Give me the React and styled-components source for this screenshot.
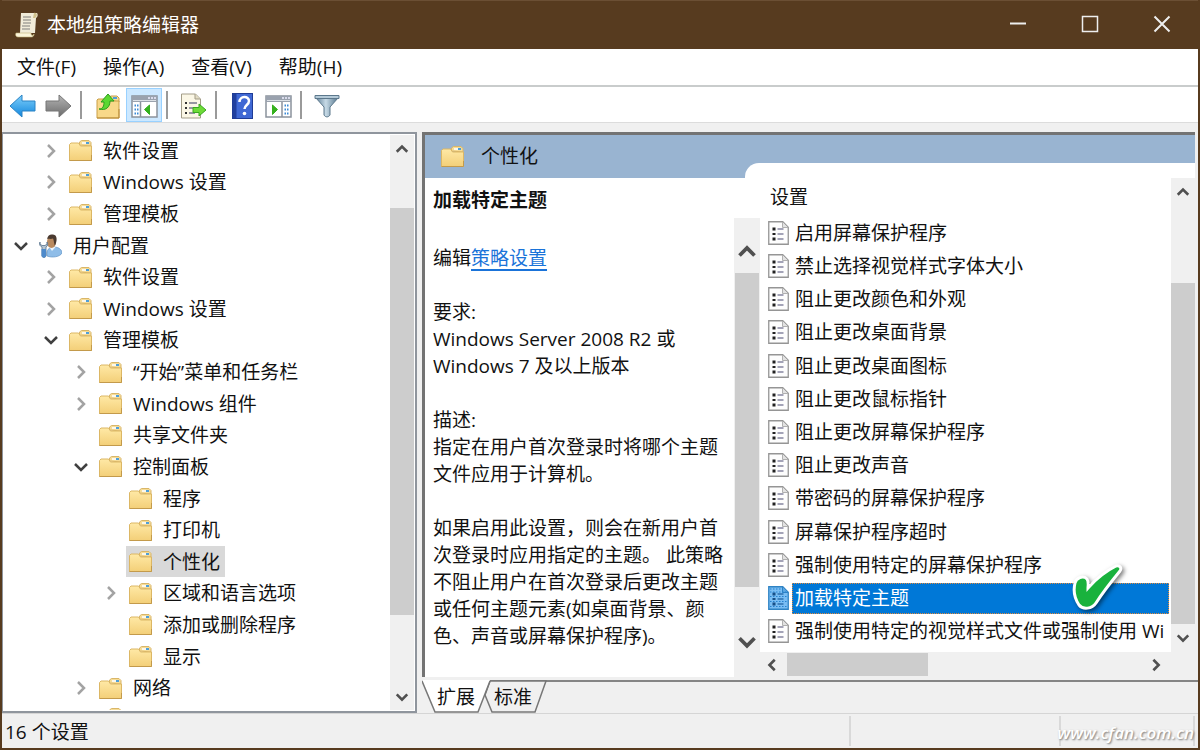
import React from "react"
import styled, { createGlobalStyle, css } from "styled-components"

const tree = [
  { level: 1, text: "软件设置", state: "closed" },
  { level: 1, text: "Windows 设置", state: "closed" },
  { level: 1, text: "管理模板", state: "closed" },
  { level: 0, text: "用户配置", state: "open", icon: "user" },
  { level: 1, text: "软件设置", state: "closed" },
  { level: 1, text: "Windows 设置", state: "closed" },
  { level: 1, text: "管理模板", state: "open" },
  { level: 2, text: "“开始”菜单和任务栏", state: "closed" },
  { level: 2, text: "Windows 组件", state: "closed" },
  { level: 2, text: "共享文件夹" },
  { level: 2, text: "控制面板", state: "open" },
  { level: 3, text: "程序" },
  { level: 3, text: "打印机" },
  { level: 3, text: "个性化", selected: true },
  { level: 3, text: "区域和语言选项", state: "closed" },
  { level: 3, text: "添加或删除程序" },
  { level: 3, text: "显示" },
  { level: 2, text: "网络", state: "closed" },
]

const settings = [
  "启用屏幕保护程序",
  "禁止选择视觉样式字体大小",
  "阻止更改颜色和外观",
  "阻止更改桌面背景",
  "阻止更改桌面图标",
  "阻止更改鼠标指针",
  "阻止更改屏幕保护程序",
  "阻止更改声音",
  "带密码的屏幕保护程序",
  "屏幕保护程序超时",
  "强制使用特定的屏幕保护程序",
  "加载特定主题",
  "强制使用特定的视觉样式文件或强制使用 Wi",
]

const menus = ["文件(F)", "操作(A)", "查看(V)", "帮助(H)"]

/* icons */

const ScrollIcon = () => (
  <svg width="24" height="26" viewBox="0 0 24 26">
    <path d="M6 1h16c1 1 1 4-1 5l-1 15H5z" fill="#f1ecd9" />
    <path d="M19 1c3-1 4 3 1 5h-2z" fill="#cfc08c" />
    <path d="M1 21h15c0 3 2 3 3 1v1c-1 2-2 2-3 2H3c-2 0-3-2-2-4z" fill="#fbf5da" stroke="#c2b478" strokeWidth=".6" />
    <path d="M8 5h8M8 8h8M8 11h8M7 14h8M7 17h8" stroke="#a5a29b" strokeWidth="1.3" />
  </svg>
)

const FolderIcon = () => (
  <svg width="23" height="22" viewBox="0 0 23 22">
    <defs>
      <linearGradient id="folder" x1="0" y1="0" x2="0" y2="1">
        <stop offset="0" stopColor="#ffe9a6" />
        <stop offset="1" stopColor="#f3cf78" />
      </linearGradient>
    </defs>
    <path d="M10.500 5V2l2-1.500h7.500l2 2V6z" fill="#f6dc97" stroke="#d9b668" />
    <path d="M13 3h7" stroke="#fff" strokeWidth="1.600" />
    <path d="M17 3h3" stroke="#4f9fd8" strokeWidth="2" />
    <path d="M.5 4.500L2 3h7.500l2 3h11v14.500H.5z" fill="url(#folder)" stroke="#dcb765" />
    <path d="M.5 20.500h22V15" fill="none" stroke="#c39a4b" />
  </svg>
)

const UserIcon = () => (
  <svg width="23" height="24" viewBox="0 0 23 24">
    <path d="M8 22c-1-6 2-9 7-9 5 0 8 3 8 6-2 4-10 5-15 3z" fill="#8fbde8" stroke="#5f92c6" strokeWidth=".7" />
    <path d="M10 12.500l3 4.500 4-4.500z" fill="#eef5fc" />
    <ellipse cx="12.500" cy="8" rx="4.500" ry="6" fill="#b98a5f" />
    <path d="M8 5c1-4 3-5 6-4.500 5 .5 4 7 2 11-1-1-1-5-2-7-2 1-4 0-6 .5z" fill="#4a3a30" />
    <path d="M1 8c-1 3 0 4 2 5v9c1 2 3 2 4 0v-9c2-1 2-3 1-5v2l-2 1.500H3L1 10z" fill="#b3c3d1" stroke="#56718b" strokeWidth=".8" />
    <path d="M2.500 15h4.500v7c-1 2-3.500 2-4.500 0z" fill="#4d8acb" />
  </svg>
)

const PolicyIcon = ({ selected }) => (
  <svg width="21" height="24" viewBox="0 0 21 24">
    <path
      d="M.75.75h14l5.500 5.500v17H.75z"
      fill={selected ? "#79bdf3" : "#fdfdfd"}
      stroke={selected ? "#2f83c4" : "#959595"}
      strokeWidth="1.3"
    />
    <path d="M14.500 1v5.500H20" fill={selected ? "#5ba6e2" : "#e2e2e2"} stroke={selected ? "#2f83c4" : "#b0b0b0"} />
    <path
      d="M4.500 6.500h3v3h-3zM4.500 12h3v2h-3zM4.500 16.500h3v3h-3z"
      fill={selected ? "#174f87" : "#222"}
    />
    <path d="M9.500 8h6M9.500 13h6M9.500 18h6" stroke={selected ? "#2d6fae" : "#8585a0"} strokeWidth="1.3" />
    {selected && (
      <path
        d="M2 3h13M2 6h17M2 10.500h17M2 15.500h17M2 20.500h17"
        stroke="#2581cf"
        strokeDasharray="1.500 1.500"
      />
    )}
  </svg>
)

const ArrowIcon = ({ forward }) => (
  <svg width="27" height="24" viewBox="0 0 27 24">
    <defs>
      <linearGradient id={forward ? "fwd" : "back"} x1="0" y1="0" x2="0" y2="1">
        <stop offset="0" stopColor={forward ? "#b5b5b5" : "#7fd0fb"} />
        <stop offset="1" stopColor={forward ? "#6b6b6b" : "#1186dd"} />
      </linearGradient>
    </defs>
    <path
      d="M1 12L13 1v6h13v10H13v6z"
      transform={forward ? "translate(27 0) scale(-1 1)" : undefined}
      fill={forward ? "url(#fwd)" : "url(#back)"}
      stroke={forward ? "#777" : "#2a83c5"}
      strokeLinejoin="round"
    />
  </svg>
)

const FolderUpIcon = () => (
  <svg width="24" height="26" viewBox="0 0 24 26">
    <path d="M13 7V4l2-1h6l2 2v4z" fill="#f6dc97" stroke="#c99e46" />
    <path d="M17 5h4" stroke="#4f9fd8" strokeWidth="2" />
    <path d="M1 7l1-1h8l2 2h11v17H1z" fill="#f8d889" stroke="#c99e46" />
    <path d="M1 25h22V16" fill="none" stroke="#b98b37" />
    <path d="M3 16c4 0 5-3 5-7H5l7-8 6 7h-4c0 6-4 10-11 8z" fill="#5cd832" stroke="#2b9c1c" strokeLinejoin="round" />
  </svg>
)

const PanelIcon = ({ flip }) => (
  <svg width="27" height="24" viewBox="0 0 27 24">
    <rect x="1" y="2" width="25" height="21" fill="#fff" stroke="#8b929c" strokeWidth="1.500" />
    <path d="M1 2h25v6H1z" fill="#9aa2ae" />
    <path d="M2 6.500h23" stroke="#dde1e6" />
    <path d="M17 4h2M20 4h2M23 4h2" stroke="#eef" strokeWidth="1.500" />
    {flip ? (
      <>
        <path d="M17 8v15" stroke="#8b929c" strokeWidth="1.500" />
        <path d="M19.500 11.500h4M19.500 15.500h4M19.500 19.500h4" stroke="#3c8bd6" strokeWidth="2" strokeDasharray="1.500 1" />
        <path d="M7.500 11l5 4.500-5 5z" fill="#36b11f" stroke="#36b11f" />
      </>
    ) : (
      <>
        <path d="M9.500 8v15" stroke="#8b929c" strokeWidth="1.500" />
        <path d="M3.500 11.500h4M3.500 15.500h4M3.500 19.500h4" stroke="#3c8bd6" strokeWidth="2" strokeDasharray="1.500 1" />
        <path d="M18.500 11l-5 4.500 5 5z" fill="#36b11f" stroke="#36b11f" />
      </>
    )}
  </svg>
)

const ExportIcon = () => (
  <svg width="27" height="26" viewBox="0 0 27 26">
    <path d="M1.500 1h14l5 5v19h-19z" fill="#fbf7e6" stroke="#a39d88" />
    <path d="M15 1v5h5" fill="#e2dcc4" stroke="#a39d88" />
    <path d="M5 10h2M5 15h2M5 20h2" stroke="#333" strokeWidth="2" />
    <path d="M9 10h8M9 15h5M9 20h6" stroke="#77778a" strokeWidth="1.500" />
    <path d="M13 14.500h6V11l7 6-7 6v-3.500h-6z" fill="#6edb38" stroke="#38a820" strokeLinejoin="round" />
  </svg>
)

const HelpIcon = () => (
  <svg width="21" height="26" viewBox="0 0 21 26">
    <rect x=".5" y=".5" width="20" height="25" fill="#3f68d4" stroke="#1f3c96" />
    <path d="M1 1h3.500v24H1z" fill="#203f9e" />
    <path d="M7.500 9c0-6.500 9.500-6.500 9.500-1 0 4-4.500 4-4.500 8" fill="none" stroke="#fff" strokeWidth="2.500" />
    <circle cx="12.500" cy="20.500" r="1.800" fill="#fff" />
  </svg>
)

const FilterIcon = () => (
  <svg width="26" height="24" viewBox="0 0 26 24">
    <defs>
      <linearGradient id="funnel">
        <stop offset="0" stopColor="#5d7c94" />
        <stop offset=".45" stopColor="#c7dae6" />
        <stop offset="1" stopColor="#4f7189" />
      </linearGradient>
    </defs>
    <path d="M1.500 3.500L10 13v8c1.500 2.500 4.500 2.500 6 0v-8l8.500-9.500z" fill="url(#funnel)" stroke="#5c788c" />
    <path d="M1 1.500h24v3H1z" fill="#b4cad8" stroke="#5c788c" />
  </svg>
)

const paths = {
  up: "M2 10l6-6 6 6",
  down: "M2 5l6 6 6-6",
  left: "M10 2L4 8l6 6",
  right: "M5 2l6 6-6 6",
}

const Chevron = ({ dir, size = 16, color = "#505050", weight = 3 }) => (
  <svg width={size} height={size} viewBox="0 0 16 16">
    <path d={paths[dir]} fill="none" stroke={color} strokeWidth={weight} />
  </svg>
)

const CheckMark = () => (
  <svg width="54" height="48" viewBox="0 0 54 48">
    <path
      d="M4 20c1-5 8-8 12-4 2 3 1 7 1 9 8-9 18-17 28-22 4-1 6 2 4 5-9 11-17 21-24 32-4 6-13 7-17 2-4-6-6-14-4-22z"
      fill="#19b23d"
      stroke="#fff"
      strokeWidth="3"
    />
  </svg>
)

function Scrollbar({ name, horizontal, size, first, thumb, last, inset = 0, arrow = 14, pad }) {
  return (
    <Bar $horizontal={horizontal} $size={size}>
      <ArrowButton
        aria-label={`${name} ${horizontal ? "left" : "up"}`}
        $length={first}
        $align={pad && "flex-end"}
        $pad={pad}
      >
        <Chevron dir={horizontal ? "left" : "up"} size={arrow} />
      </ArrowButton>
      <Track>
        <Space $grow={thumb[0]} />
        <Thumb $grow={thumb[1]} $inset={inset} />
        <Space $grow={thumb[2]} />
      </Track>
      <ArrowButton
        aria-label={`${name} ${horizontal ? "right" : "down"}`}
        $length={last}
        $align={pad && "flex-start"}
        $pad={pad}
      >
        <Chevron dir={horizontal ? "right" : "down"} size={arrow} />
      </ArrowButton>
    </Bar>
  )
}

function TreeRow({ item }) {
  return (
    <TreeItem $level={item.level}>
      <Toggle>
        {item.state === "open" && <Chevron dir="down" color="#404040" weight={2.5} />}
        {item.state === "closed" && <Chevron dir="right" color="#a3a3a3" weight={2.5} />}
      </Toggle>
      <TreeButton $selected={item.selected}>
        {item.icon === "user" ? <UserIcon /> : <FolderIcon />}
        {item.text}
      </TreeButton>
    </TreeItem>
  )
}

export default function App() {
  return (
    <Window>
      <GlobalStyle />
      <TitleBar>
        <ScrollIcon />
        <Title>本地组策略编辑器</Title>
        <WindowButton aria-label="最小化">
          <svg width="18" height="18"><path d="M1 8.500h16" stroke="#eee" strokeWidth="2" /></svg>
        </WindowButton>
        <WindowButton aria-label="最大化">
          <svg width="18" height="18"><path d="M1.500 1.500h15v15h-15z" fill="none" stroke="#eee" strokeWidth="1.500" /></svg>
        </WindowButton>
        <WindowButton aria-label="关闭">
          <svg width="18" height="18"><path d="M1.500 1.500l15 15m0-15l-15 15" stroke="#eee" strokeWidth="2" /></svg>
        </WindowButton>
      </TitleBar>

      <MenuBar>
        {menus.map(menu => (
          <MenuButton key={menu}>{menu}</MenuButton>
        ))}
      </MenuBar>

      <ToolBar>
        <ToolButton aria-label="后退"><ArrowIcon /></ToolButton>
        <ToolButton aria-label="前进"><ArrowIcon forward /></ToolButton>
        <Separator />
        <ToolButton aria-label="向上一级"><FolderUpIcon /></ToolButton>
        <ToolButton aria-label="显示控制台树" $active><PanelIcon /></ToolButton>
        <Separator />
        <ToolButton aria-label="导出列表"><ExportIcon /></ToolButton>
        <Separator />
        <ToolButton aria-label="帮助"><HelpIcon /></ToolButton>
        <ToolButton aria-label="显示操作窗格"><PanelIcon flip /></ToolButton>
        <Separator />
        <ToolButton aria-label="筛选器"><FilterIcon /></ToolButton>
      </ToolBar>

      <Main>
        <TreePane>
          <Tree>
            {tree.map((item, i) => (
              <TreeRow key={i} item={item} />
            ))}
            <ClippedRow><FolderIcon /></ClippedRow>
          </Tree>
          <Scrollbar name="tree" size={24} first={30} last={26} thumb={[43, 407, 69]} />
        </TreePane>

        <Right>
          <Details>
            <Header>
              <HeaderTitle>
                <FolderIcon />
                个性化
              </HeaderTitle>
              <HeaderCurve />
            </Header>
            <Body>
              <Description>
                <h1>加载特定主题</h1>
                <p>编辑<a href="#policy">策略设置</a></p>
                <p>
                  要求:
                  <br />
                  Windows Server 2008 R2 或
                  <br />
                  Windows 7 及以上版本
                </p>
                <p>
                  描述:
                  <br />
                  指定在用户首次登录时将哪个主题
                  <br />
                  文件应用于计算机。
                </p>
                <p>
                  如果启用此设置，则会在新用户首
                  <br />
                  次登录时应用指定的主题。 此策略
                  <br />
                  不阻止用户在首次登录后更改主题
                  <br />
                  或任何主题元素(如桌面背景、颜
                  <br />
                  色、声音或屏幕保护程序)。
                </p>
              </Description>
              <DescriptionScroll>
                <Scrollbar
                  name="description"
                  size={26}
                  first={54}
                  last={54}
                  thumb={[0, 317, 35]}
                  inset={1}
                  arrow={20}
                  pad={9}
                />
              </DescriptionScroll>
              <ListArea>
                <ListColumn>
                  <ListHeading>设置</ListHeading>
                  <List>
                    {settings.map(text => {
                      const selected = text === "加载特定主题"
                      return (
                        <ListItem key={text}>
                          <PolicyIcon selected={selected} />
                          <ListButton $selected={selected}>{text}</ListButton>
                          {selected && <Tick><CheckMark /></Tick>}
                        </ListItem>
                      )
                    })}
                  </List>
                  <Scrollbar name="list" horizontal size={25} first={26} last={30} thumb={[0, 141, 212]} inset={1} />
                </ListColumn>
                <ListScroll>
                  <Scrollbar name="list" size={24} first={30} last={28} thumb={[75, 339, 0]} />
                </ListScroll>
              </ListArea>
            </Body>
          </Details>
          <Tabs>
            <TabShape viewBox="0 0 126 33" width="126" height="33" aria-hidden="true">
              <path d="M68 1l-5 14 7 17h43L124 1z" fill="#f0f0f0" stroke="#777" strokeWidth="1.500" />
              <path d="M0 0l13 32h43L68 0z" fill="#fff" />
              <path d="M0 1l13 31h43L68 1" fill="none" stroke="#777" strokeWidth="1.500" />
            </TabShape>
            <TabButton>扩展</TabButton>
            <TabButton>标准</TabButton>
          </Tabs>
        </Right>
      </Main>

      <StatusBar>
        <StatusText>16 个设置</StatusText>
        <StatusCell $width={210} />
        <StatusCell $width={134} />
        <StatusCell $width={2} />
        <Watermark>www.cfan.com.cn</Watermark>
      </StatusBar>
    </Window>
  )
}

const GlobalStyle = createGlobalStyle`
  * {
    box-sizing: border-box;
  }
  body {
    margin: 0;
    font-family: "Open Sans", "Noto Sans CJK SC", sans-serif;
    font-size: 19px;
    line-height: 27px;
    color: #111;
  }
  button {
    font: inherit;
    color: inherit;
    border: 0;
    padding: 0;
    background: none;
    white-space: nowrap;
  }
  svg {
    display: block;
    flex-shrink: 0;
  }
  ul {
    margin: 0;
    padding: 0;
    list-style: none;
  }
`

const Window = styled.div`
  display: flex;
  flex-direction: column;
  height: 100vh;
  overflow: hidden;
  border: 2px solid #573b1f;
  border-top: 0;
  background: #f0f0f0;
`

const TitleBar = styled.header`
  display: flex;
  align-items: center;
  flex: 0 0 49px;
  padding-left: 13px;
  background: #573b1f;
  border-top: 1px solid #6b4f34;
  color: #fff;
`

const Title = styled.div`
  flex: 1;
  padding-left: 8px;
`

const WindowButton = styled.button`
  display: flex;
  align-items: center;
  justify-content: center;
  width: 72px;
  height: 48px;
  padding-bottom: 2px;
`

const MenuBar = styled.nav`
  display: flex;
  align-items: center;
  gap: 27px;
  flex: 0 0 38px;
  padding: 0 15px;
  background: #fff;
  border-bottom: 2px solid #c9cccc;
`

const MenuButton = styled.button`
  line-height: 27px;
`

const ToolBar = styled.div`
  display: flex;
  align-items: center;
  flex: 0 0 36px;
  padding-left: 2px;
  background: #fff;
  border-bottom: 1px solid #dcdcdc;
`

const ToolButton = styled.button`
  display: flex;
  align-items: center;
  justify-content: center;
  width: 36px;
  height: 34px;
  padding-top: 2px;
  ${({ $active }) =>
    $active &&
    css`
      background: #cce8ff;
      border: 1px solid #99d1ff;
    `}
`

const Separator = styled.div`
  width: 2px;
  height: 28px;
  margin: 0 8px 0 4px;
  background: #9a9a9a;
  & ~ & {
    margin-right: 7px;
  }
`

const Main = styled.main`
  display: flex;
  flex: 1;
  gap: 5px;
  min-height: 0;
  padding-top: 9px;
`

const TreePane = styled.section`
  display: flex;
  flex: 0 0 415px;
  min-height: 0;
  padding: 1px;
  background: #fff;
  border: 2px solid #8f959d;
  border-left-width: 1px;
`

const Tree = styled.ul`
  display: flex;
  flex-direction: column;
  flex: 1;
  min-width: 0;
  overflow: hidden;
`

const TreeItem = styled.li`
  display: flex;
  align-items: center;
  gap: 4px;
  flex: 1;
  min-height: 0;
  padding-left: ${({ $level }) => 6 + $level * 30}px;
`

const Toggle = styled.span`
  display: flex;
  justify-content: center;
  width: 22px;
`

const TreeButton = styled.button`
  display: flex;
  align-items: center;
  gap: 11px;
  height: 31px;
  padding: 1px 5px 0 3px;
  background: ${({ $selected }) => ($selected ? "#d9d9d9" : "transparent")};
`

const ClippedRow = styled.li`
  flex: 0 0 6px;
  padding: 4px 0 0 95px;
  overflow: hidden;
`

const Bar = styled.div`
  display: flex;
  flex-direction: ${({ $horizontal }) => ($horizontal ? "row" : "column")};
  flex: 0 0 ${({ $size }) => $size}px;
  background: #f0f0f0;
`

const ArrowButton = styled.button`
  display: flex;
  align-items: ${({ $align }) => $align || "center"};
  justify-content: center;
  flex: 0 0 ${({ $length }) => $length}px;
  padding: ${({ $pad }) => $pad || 0}px 0;
`

const Track = styled.div`
  display: flex;
  flex-direction: inherit;
  flex: 1;
`

const Space = styled.div`
  flex: ${({ $grow }) => $grow} 0 0;
`

const Thumb = styled.div`
  flex: ${({ $grow }) => $grow} 0 0;
  margin: ${({ $inset }) => $inset}px;
  background: #cdcdcd;
`

const Right = styled.section`
  display: flex;
  flex-direction: column;
  flex: 1;
  min-width: 0;
`

const Details = styled.div`
  display: flex;
  flex-direction: column;
  flex: 1;
  min-height: 0;
  margin-right: 3px;
  border-top: 3px solid #737373;
  border-left: 3px solid #737373;
  background: #f0f0f0;
`

const Header = styled.div`
  display: flex;
  align-items: flex-end;
  flex: 0 0 43px;
  background: #99b4d1;
`

const HeaderTitle = styled.div`
  display: flex;
  align-items: center;
  gap: 17px;
  flex: 0 0 320px;
  height: 43px;
  padding-left: 16px;
`

const HeaderCurve = styled.div`
  flex: 1;
  height: 15px;
  border-top-left-radius: 14px;
  background: #fff;
`

const Body = styled.div`
  display: flex;
  flex: 1;
  min-height: 0;
  background: #fff;
`

const Description = styled.article`
  flex: 0 0 309px;
  padding: 9px 0 0 8px;
  overflow: hidden;
  white-space: nowrap;
  h1 {
    margin: 0 0 31px;
    font-size: 19px;
    font-weight: 700;
  }
  p {
    margin: 0 0 27px;
  }
  a {
    color: #1a73d9;
    text-underline-offset: 4px;
    text-decoration-thickness: 2px;
  }
`

const DescriptionScroll = styled.div`
  display: flex;
  padding-top: 40px;
`

const ListArea = styled.div`
  display: flex;
  flex: 1;
  min-width: 0;
  background: #fff;
`

const ListColumn = styled.div`
  display: flex;
  flex-direction: column;
  flex: 1;
  min-width: 0;
`

const ListHeading = styled.div`
  flex: 0 0 38px;
  padding: 6px 0 0 10px;
`

const List = styled.ul`
  display: flex;
  flex-direction: column;
  flex: 1;
  min-height: 0;
  padding: 0 2px 4px 8px;
`

const ListItem = styled.li`
  display: flex;
  align-items: center;
  gap: 3px;
  position: relative;
  flex: 1;
  min-height: 0;
`

const ListButton = styled.button`
  flex: 1;
  min-width: 0;
  height: 31px;
  padding: 1px 0 0 2px;
  overflow: hidden;
  text-align: left;
  border: 1px dotted transparent;
  ${({ $selected }) =>
    $selected &&
    css`
      background: #0078d7;
      border-color: #e08a3c;
      color: #fff;
    `}
`

const Tick = styled.span`
  position: absolute;
  right: 44px;
  bottom: 4px;
  filter: drop-shadow(2px 2px 2px rgba(0, 0, 0, 0.5));
`

const ListScroll = styled.div`
  display: flex;
  padding-bottom: 25px;
  background: #f0f0f0;
`

const Tabs = styled.div`
  display: flex;
  align-items: center;
  position: relative;
  flex: 0 0 33px;
  margin-top: 3px;
  padding-left: 15px;
  gap: 19px;
  border-top: 2px solid #858585;
`

const TabShape = styled.svg`
  position: absolute;
  top: -2px;
  left: 0;
`

const TabButton = styled.button`
  position: relative;
`

const StatusBar = styled.footer`
  display: flex;
  position: relative;
  flex: 0 0 35px;
  padding: 2px 3px 2px 0;
  border-top: 1px solid #d5d5d5;
`

const StatusText = styled.div`
  flex: 1;
  padding: 3px 0 0 3px;
`

const StatusCell = styled.div`
  flex: 0 0 ${({ $width }) => $width}px;
  border-left: 2px solid #d9d9d9;
`

const Watermark = styled.span`
  position: absolute;
  right: 4px;
  bottom: 2px;
  font-size: 17px;
  font-style: italic;
  font-weight: 600;
  color: #fff;
  text-shadow: 1px 1px 2px #777;
`
